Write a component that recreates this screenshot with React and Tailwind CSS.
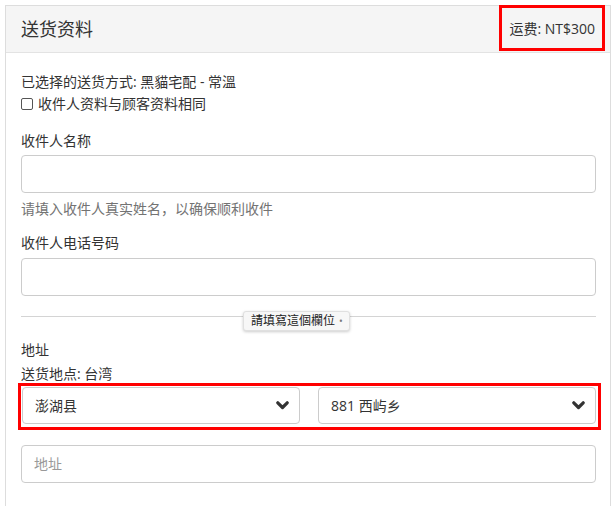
import React from "react";

const font = { fontFamily: '"Open Sans", "Noto Sans CJK SC", sans-serif' };

function Chevron() {
  return (
    <svg width="13" height="9" viewBox="0 0 13 9" className="shrink-0">
      <polyline
        points="1.8,1.8 6.5,6.5 11.2,1.8"
        fill="none"
        stroke="#333"
        strokeWidth="3.2"
        strokeLinecap="round"
        strokeLinejoin="round"
      />
    </svg>
  );
}

function Select({ value }) {
  return (
    <div className="flex h-[37px] items-center justify-between rounded-[4px] border border-[#ccc] bg-white pl-3 pr-[10px] text-[14px] text-[#333]">
      <span>{value}</span>
      <Chevron />
    </div>
  );
}

function TextInput({ placeholder }) {
  return (
    <div className="flex h-[38px] items-center rounded-[4px] border border-[#ccc] bg-white px-3 text-[14px] text-[#999]">
      {placeholder}
    </div>
  );
}

export default function App() {
  return (
    <div className="min-h-screen bg-white pl-[5px] pt-[5px]" style={font}>
      <div className="w-[606px] border border-[#ddd] bg-white">
        {/* panel heading */}
        <div className="flex h-[47px] items-center justify-between border-b border-[#e3e3e3] bg-[#f5f5f5] pl-[15px]">
          <h3 className="text-[18px] leading-6 text-[#333]">送货资料</h3>
          <div className="mr-[5px] flex h-[46px] -mt-[2px] items-center border-[3px] border-[#f00] px-[7px] text-[14px] text-[#333]">
            运费: NT$300
          </div>
        </div>

        {/* panel body */}
        <div className="pb-12 pl-[15px] pr-[14px] pt-[18px] text-[14px] leading-[22px] text-[#333]">
          <p>已选择的送货方式: 黑貓宅配 - 常溫</p>
          <label className="flex items-center gap-[5px]">
            <span className="h-[12px] w-[12px] rounded-[2px] border border-[#555] bg-white" />
            收件人资料与顾客资料相同
          </label>

          <div className="mt-[15px]">
            <div className="mb-[4px] leading-[21px]">收件人名称</div>
            <TextInput />
            <p className="mt-[6px] leading-5 text-[#737373]">请填入收件人真实姓名，以确保顺利收件</p>
          </div>

          <div className="mt-[13px]">
            <div className="mb-[5px] leading-[21px]">收件人电话号码</div>
            <TextInput />
          </div>

          {/* divider with validation bubble */}
          <div className="relative mt-[20px] h-px bg-[#d4d4d4]">
            <div className="absolute left-[222px] top-[-5px] flex h-[20px] items-center whitespace-nowrap rounded-[3px] border border-[#e0e0e0] bg-[#f7f7f7] pl-[7px] pr-[6px] text-[12px] leading-none text-[#222] shadow-[0_1px_3px_rgba(0,0,0,0.2)]">
              請填寫這個欄位
              <span className="ml-[4px] text-[10px] text-[#777]">•</span>
            </div>
          </div>

          <div className="mt-[23px] leading-5">地址</div>
          <div className="mt-[4px] leading-5">送货地点: 台湾</div>

          <div className="-mt-px -ml-[3px] -mr-[5px] border-[3px] border-[#f00] pb-[3px] pr-[2px] pt-px">
            <div className="grid grid-cols-2 gap-[18px] pl-px">
              <Select value="澎湖县" />
              <Select value="881 西屿乡" />
            </div>
          </div>

          <div className="mt-[15px]">
            <TextInput placeholder="地址" />
          </div>
        </div>
      </div>
    </div>
  );
}
